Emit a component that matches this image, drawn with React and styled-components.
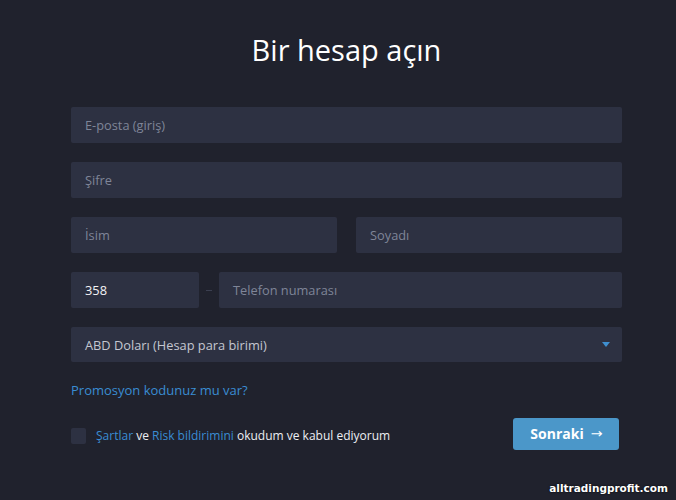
import React from 'react';
import styled, { createGlobalStyle } from 'styled-components';

const GlobalStyle = createGlobalStyle`
  html, body {
    margin: 0;
    padding: 0;
    background: #20222d;
  }
  body {
    font-family: "Open Sans", "Noto Sans", sans-serif;
    width: 676px;
    height: 500px;
    overflow: hidden;
  }
`;

const Page = styled.div`
  position: relative;
  width: 676px;
  height: 500px;
  box-sizing: border-box;
  padding: 30px 54px 0 71px;
`;

const Title = styled.h1`
  margin: 0 0 37px;
  height: 40px;
  line-height: 40px;
  font-size: 29px;
  font-weight: 400;
  color: #ffffff;
  text-align: center;
`;

const Form = styled.form`
  display: flex;
  flex-direction: column;
  gap: 19px;
  width: 551px;
`;

const Row = styled.div`
  display: flex;
  align-items: center;
  gap: ${(p) => p.gap || 19}px;
`;

const Field = styled.div`
  flex: ${(p) => (p.width ? `0 0 ${p.width}px` : p.grow ? '1 1 0' : '0 0 auto')};
  height: ${(p) => p.h || 36}px;
  box-sizing: border-box;
  padding: 0 14px;
  display: flex;
  align-items: center;
  justify-content: space-between;
  background: #2d3142;
  border-radius: 2px;
  font-size: 12.8px;
  color: ${(p) => p.color || '#7f8598'};
`;

const Dash = styled.span`
  width: 6px;
  height: 1px;
  background: #3b3f50;
`;

const Caret = styled.span`
  width: 0;
  height: 0;
  border-left: 4px solid transparent;
  border-right: 4px solid transparent;
  border-top: 5px solid #3f8fd0;
  margin-right: -2px;
`;

const PromoLink = styled.a`
  display: block;
  line-height: 18px;
  font-size: 13px;
  color: #3a8dd3;
  text-decoration: none;
`;

const Footer = styled.div`
  display: flex;
  align-items: center;
  justify-content: space-between;
  margin-right: 3px;
`;

const Agree = styled.label`
  display: flex;
  align-items: center;
  gap: 10px;
  font-size: 12px;
  color: #eceef2;
  margin-top: 3px;
`;

const Box = styled.span`
  width: 15px;
  height: 16px;
  background: #2d3142;
  border-radius: 2px;
`;

const Link = styled.span`
  color: #3a8dd3;
`;

const Button = styled.button`
  display: flex;
  align-items: center;
  justify-content: center;
  gap: 7px;
  width: 106px;
  height: 32px;
  padding: 0 0 2px;
  border: none;
  border-radius: 3px;
  background: #4b97c9;
  color: #ffffff;
  font-family: "Open Sans", sans-serif;
  font-size: 14px;
  font-weight: 700;
  cursor: pointer;
`;

const Arrow = styled.span`
  font-family: "DejaVu Sans", sans-serif;
  font-weight: 400;
  font-size: 13px;
  transform: scaleX(1.1);
`;

const Watermark = styled.div`
  position: absolute;
  right: 8px;
  bottom: 6px;
  font-family: "DejaVu Sans", sans-serif;
  font-weight: 700;
  font-size: 10.5px;
  color: #ffffff;
  text-shadow: 0 0 2px #000;
`;

export default function App() {
  return (
    <>
      <GlobalStyle />
      <Page>
        <Title>Bir hesap açın</Title>
        <Form>
          <Field>E-posta (giriş)</Field>
          <Field>Şifre</Field>
          <Row>
            <Field grow>İsim</Field>
            <Field grow>Soyadı</Field>
          </Row>
          <Row gap={7}>
            <Field width={128} color="#f2f3f5">358</Field>
            <Dash />
            <Field grow>Telefon numarası</Field>
          </Row>
          <Field h={35} color="#c4c7d1">
            ABD Doları (Hesap para birimi)
            <Caret />
          </Field>
          <PromoLink href="#">Promosyon kodunuz mu var?</PromoLink>
          <Footer>
            <Agree>
              <Box />
              <span>
                <Link>Şartlar</Link> ve <Link>Risk bildirimini</Link> okudum ve kabul ediyorum
              </span>
            </Agree>
            <Button type="button">
              Sonraki <Arrow>→</Arrow>
            </Button>
          </Footer>
        </Form>
        <Watermark>alltradingprofit.com</Watermark>
      </Page>
    </>
  );
}
